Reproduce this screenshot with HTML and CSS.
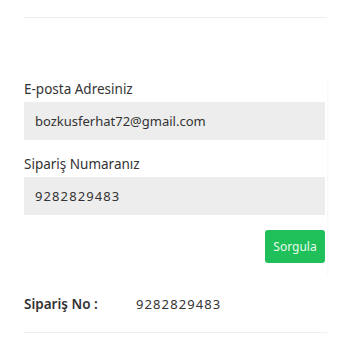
FILE: index.html
```html
<!DOCTYPE html>
<html lang="tr">
<head>
<meta charset="utf-8">
<link rel="stylesheet" href="styles.css">
</head>
<body>
<div class="page">
  <div class="rule rule-top"></div>
  <form class="form">
    <label class="label">E-posta Adresiniz</label>
    <div class="input">bozkusferhat72@gmail.com</div>
    <label class="label label-2">Sipariş Numaranız</label>
    <div class="input num">9282829483</div>
    <div class="actions"><button type="button" class="btn">Sorgula</button></div>
  </form>
  <div class="result">
    <span class="result-key">Sipariş No :</span>
    <span class="result-val num">9282829483</span>
  </div>
  <div class="rule rule-bottom"></div>
</div>
</body>
</html>
```
FILE: styles.css
```css
html, body {
  margin: 0;
  padding: 0;
  background: #fff;
}
body {
  font-family: "Noto Sans", "DejaVu Sans", sans-serif;
  color: #333;
  font-size: 14px;
}
.page {
  padding: 17px 23px 0 24px;
}
.rule {
  height: 1px;
  background: #eeeeee;
}
.form {
  display: flex;
  flex-direction: column;
  margin-top: 62px;
  padding-right: 2px;
  box-shadow: 2px 0 2px -1px rgba(0,0,0,0.04);
}
.label {
  display: block;
  height: 22px;
  line-height: 18px;
  font-size: 13.5px;
  color: #333;
}
.label-2 {
  margin-top: 15px;
}
.input {
  height: 38px;
  line-height: 38px;
  background: #ededed;
  padding-left: 11px;
  font-size: 13px;
  color: #333;
}
.num {
  letter-spacing: 1.1px;
}
.actions {
  display: flex;
  justify-content: flex-end;
  margin-top: 15px;
  padding-bottom: 14px;
}
.btn {
  width: 60px;
  height: 33px;
  border: 0;
  border-radius: 3px;
  background: #1fbf59;
  color: #e9fbee;
  font-family: "Noto Sans", "DejaVu Sans", sans-serif;
  font-size: 12px;
  padding: 0;
}
.result {
  display: flex;
  align-items: center;
  height: 41px;
  margin-top: 6px;
  margin-bottom: 8px;
}
.result-key {
  width: 112px;
  font-weight: 600;
  font-size: 13.5px;
  color: #333;
}
.result-val {
  font-size: 13px;
  color: #333;
}
```
